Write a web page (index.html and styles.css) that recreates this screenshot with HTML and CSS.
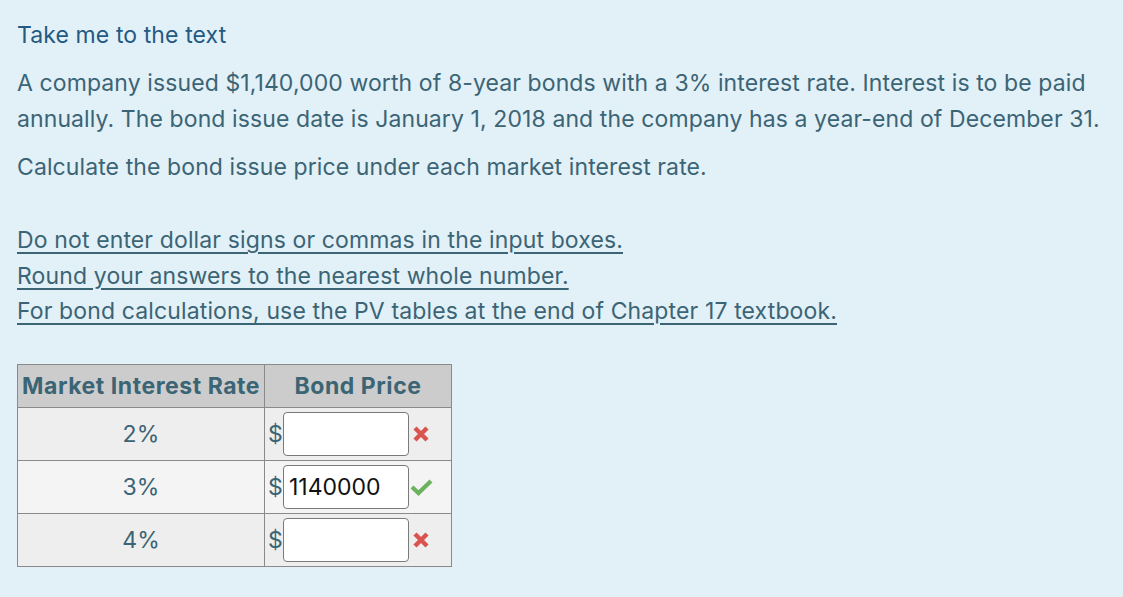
FILE: index.html
```html
<!DOCTYPE html>
<html>
<head>
<meta charset="utf-8">
<link rel="stylesheet" href="styles.css">
</head>
<body>
<div class="page">
  <p class="link-text">Take me to the text</p>
  <p class="para">A company issued $1,140,000 worth of 8-year bonds with a 3% interest rate. Interest is to be paid annually. The bond issue date is January 1, 2018 and the company has a year-end of December 31.</p>
  <p class="para calc">Calculate the bond issue price under each market interest rate.</p>
  <div class="notes">
    <span class="note">Do not enter dollar signs or commas in the input boxes.</span>
    <span class="note">Round your answers to the nearest whole number.</span>
    <span class="note">For bond calculations, use the PV tables at the end of Chapter 17 textbook.</span>
  </div>
  <table class="grid">
    <colgroup><col class="col-rate"><col class="col-price"></colgroup>
    <thead>
      <tr><th class="c-rate">Market Interest Rate</th><th class="c-price">Bond Price</th></tr>
    </thead>
    <tbody>
      <tr class="odd">
        <td class="rate">2%</td>
        <td class="price"><div class="cell"><span class="dollar">$</span><input class="box" type="text" value=""><svg class="mark" viewBox="0 0 16 16" width="16" height="16"><path d="M2 2 L14 14 M14 2 L2 14" stroke="#d9534f" stroke-width="4.4" stroke-linecap="butt"/></svg></div></td>
      </tr>
      <tr class="even">
        <td class="rate">3%</td>
        <td class="price"><div class="cell"><span class="dollar">$</span><input class="box" type="text" value="1140000"><svg class="mark check" viewBox="0 0 23 18" width="23" height="18"><path d="M2 9 L8.5 15 L21 3" fill="none" stroke="#6cb25f" stroke-width="4.2" stroke-linejoin="miter"/></svg></div></td>
      </tr>
      <tr class="odd">
        <td class="rate">4%</td>
        <td class="price"><div class="cell"><span class="dollar">$</span><input class="box" type="text" value=""><svg class="mark" viewBox="0 0 16 16" width="16" height="16"><path d="M2 2 L14 14 M14 2 L2 14" stroke="#d9534f" stroke-width="4.4" stroke-linecap="butt"/></svg></div></td>
      </tr>
    </tbody>
  </table>
</div>
</body>
</html>
```

FILE: styles.css
```css
html, body {
  margin: 0;
  padding: 0;
  background: #e2f0f8;
}
body {
  font-family: Inter, "Open Sans", "Liberation Sans", sans-serif;
  color: #3b6474;
  font-size: 23px;
  letter-spacing: 0.1px;
}
.page {
  padding: 18px 17px 20px 17px;
  width: 1089px;
  box-sizing: content-box;
}
p {
  margin: 0;
}
.link-text {
  color: #235a83;
  line-height: 34px;
  margin-bottom: 13px;
}
.para {
  line-height: 36px;
}
.calc {
  margin-top: 12px;
}
.notes {
  display: flex;
  flex-direction: column;
  align-items: flex-start;
  margin-top: 38px;
}
.note {
  text-decoration: underline;
  text-underline-offset: 4px;
  text-decoration-thickness: 2px;
  line-height: 35.5px;
  letter-spacing: 0.13px;
}
.grid {
  margin-top: 34px;
  border-collapse: collapse;
  border: 1px solid #8a8a8a;
  table-layout: fixed;
  width: 434px;
}
.col-rate { width: 247px; }
.col-price { width: 187px; }
.grid th, .grid td {
  border: 1px solid #8a8a8a;
  padding: 0;
}
.grid th {
  background: #cccccc;
  font-weight: 700;
  height: 42px;
  font-size: 23px;
  color: #3b6474;
  white-space: nowrap;
  letter-spacing: 0.55px;
}
.c-rate {
  text-align: left;
  padding-left: 4px !important;
}
.odd td { background: #eeeeee; }
.even td { background: #f4f4f4; }
.grid td {
  height: 52px;
}
.rate {
  text-align: center;
}
.cell {
  display: flex;
  align-items: center;
  padding-left: 3px;
}
.dollar {
  width: 15px;
}
.box {
  width: 126px;
  height: 44px;
  box-sizing: border-box;
  border: 1px solid #7a7a7a;
  border-radius: 4px;
  background: #fff;
  font-family: Inter, "Open Sans", "Liberation Sans", sans-serif;
  font-size: 23px;
  color: #111;
  padding: 0 5px;
  margin: 0;
  outline: none;
}
.mark {
  margin-left: 4px;
}
.check {
  margin-left: 1px;
}
```
